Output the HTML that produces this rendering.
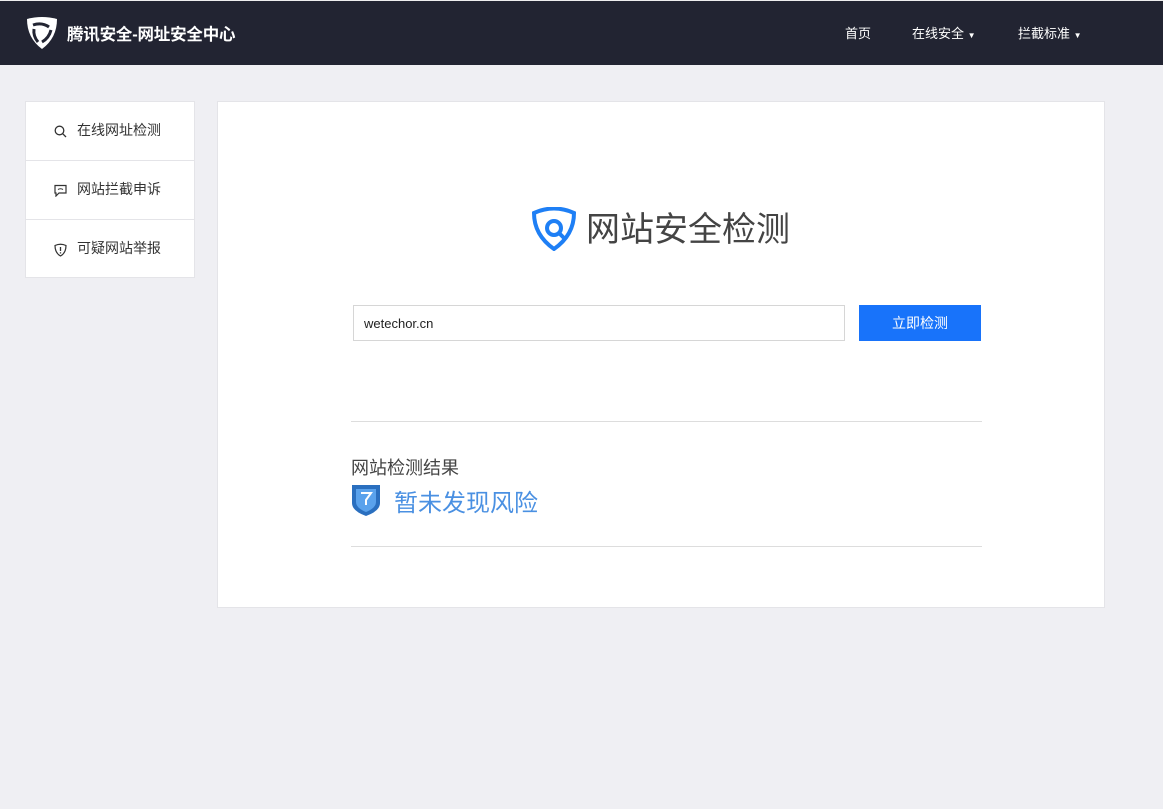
<!DOCTYPE html>
<html><head><meta charset="utf-8"><style>
*{margin:0;padding:0;box-sizing:border-box}
body{width:1163px;height:809px;background:#efeff3;font-family:"Liberation Sans","Noto Sans CJK SC",sans-serif;position:relative;overflow:hidden}
.top{position:absolute;left:0;top:0;width:1163px;height:65px;background:#222432;border-top:1px solid #eee}
.logo{position:absolute;left:67px;top:20px;color:#fff;font-weight:bold;font-size:16.5px;letter-spacing:-0.2px}
.nav{position:absolute;top:22px;color:#fff;font-size:13px}
.side{position:absolute;left:25px;top:101px;width:170px;height:177px;background:#fff;border:1px solid #e4e4e8}
.side div{height:59px;border-bottom:1px solid #e4e4e8;font-size:14px;color:#333;line-height:57px;padding-left:51px;position:relative}
.side div:last-child{border-bottom:none}
.side svg{position:absolute;left:28px;top:23px}
.main{position:absolute;left:217px;top:101px;width:888px;height:507px;background:#fff;border:1px solid #e4e4e8}
</style></head><body>
<div class="top">
<svg style="position:absolute;left:25px;top:15px" width="34" height="34" viewBox="0 0 34 34"><path d="M2 3 Q17 -1 32 3 Q32 22 17 33 Q2 22 2 3Z" fill="#fff"/><path d="M8 9 Q17 6 24 11 M26 14 Q24 22 17 26 M13 26 Q8 20 9 13" stroke="#222432" stroke-width="3" fill="none"/></svg>
<div class="logo">腾讯安全-网址安全中心</div>
<div class="nav" style="left:845px">首页</div>
<div class="nav" style="left:912px">在线安全 <span style="font-size:8px">▼</span></div>
<div class="nav" style="left:1018px">拦截标准 <span style="font-size:8px">▼</span></div>
</div>
<div class="side">
<div><svg width="13" height="13" viewBox="0 0 13 13"><circle cx="5.5" cy="5.5" r="4.3" stroke="#333" stroke-width="1.3" fill="none"/><path d="M8.7 8.7L12 12" stroke="#333" stroke-width="1.3"/></svg>在线网址检测</div>
<div><svg width="13" height="13" viewBox="0 0 13 13"><path d="M1 1.5H12V9H5L2 12V9H1Z" stroke="#333" stroke-width="1.2" fill="none"/><path d="M4 5.5Q6.5 4 9 5.5" stroke="#333" stroke-width="1.1" fill="none"/></svg>网站拦截申诉</div>
<div><svg width="13" height="14" viewBox="0 0 13 14"><path d="M1 2.5Q6.5 0 12 2.5Q12 10 6.5 13Q1 10 1 2.5Z" stroke="#333" stroke-width="1.2" fill="none"/><path d="M6.5 4V8M6.5 9.3V10.5" stroke="#333" stroke-width="1.3"/></svg>可疑网站举报</div>
</div>
<div class="main">
<svg style="position:absolute;left:314px;top:105px" width="45" height="44" viewBox="0 0 45 44"><path d="M2 6Q22 -3 42 6Q42 28 22 42Q2 28 2 6Z" fill="none" stroke="#1e7ff5" stroke-width="4"/><circle cx="22" cy="21" r="7" stroke="#1e7ff5" stroke-width="4" fill="none"/><path d="M27 26L33 32" stroke="#1e7ff5" stroke-width="4"/></svg>
<div style="position:absolute;left:368px;top:100px;font-size:34px;color:#444">网站安全检测</div>
<div style="position:absolute;left:135px;top:203px;width:492px;height:36px;border:1px solid #d6d6d6;font-size:13px;padding:10px;color:#222;line-height:15px">wetechor.cn</div>
<div style="position:absolute;left:641px;top:203px;width:122px;height:36px;background:#1873fa;color:#fff;font-size:14px;text-align:center;line-height:36px">立即检测</div>
<div style="position:absolute;left:133px;top:319px;width:631px;height:1px;background:#ddd"></div>
<div style="position:absolute;left:133px;top:352px;font-size:18px;color:#444">网站检测结果</div>
<svg style="position:absolute;left:133px;top:382px" width="30" height="33" viewBox="0 0 30 33"><path d="M1 1H29V19Q29 27 15 32Q1 27 1 19Z" fill="#2a6fbf"/><path d="M5 5H25V18Q25 24 15 28Q5 24 5 18Z" fill="#5aa2ec"/><path d="M10 9H20L15 16V21" stroke="#fff" stroke-width="2" fill="none"/></svg>
<div style="position:absolute;left:176px;top:381px;font-size:24px;color:#4a90e2">暂未发现风险</div>
<div style="position:absolute;left:133px;top:444px;width:631px;height:1px;background:#ddd"></div>
</div>
</body></html>
